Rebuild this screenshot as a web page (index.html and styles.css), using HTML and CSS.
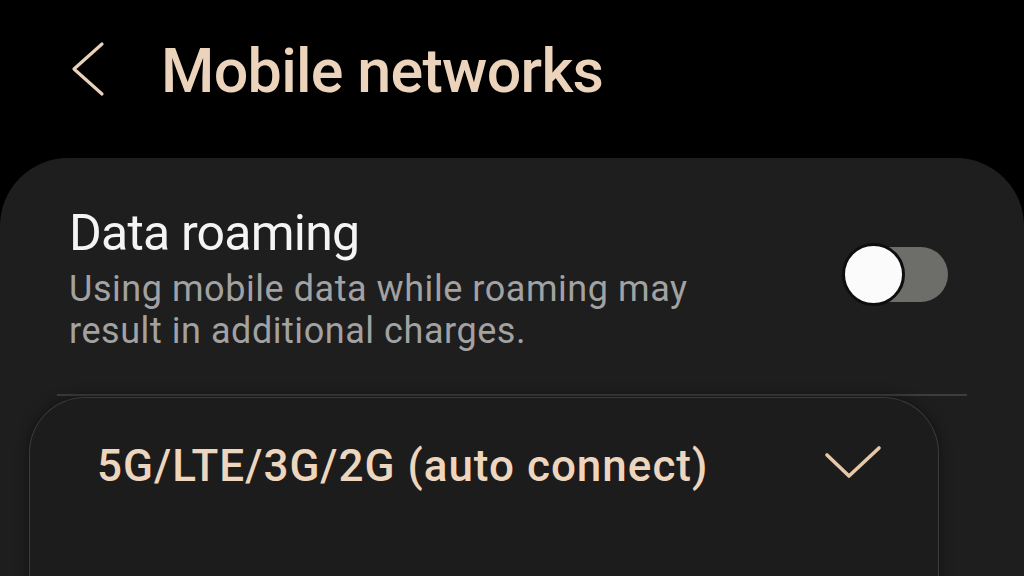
FILE: index.html
```html
<!DOCTYPE html>
<html lang="en">
<head>
<meta charset="utf-8">
<title>Mobile networks</title>
<link rel="stylesheet" href="styles.css">
</head>
<body>
<header class="appbar">
  <svg class="back" width="34" height="56" viewBox="0 0 34 56"><path d="M31 3 L3 28 L31 53" fill="none" stroke="#e9d2bb" stroke-width="3.2" stroke-linecap="round" stroke-linejoin="round"/></svg>
  <h1 class="title">Mobile networks</h1>
</header>
<main class="card">
  <div class="row">
    <div class="row-text">
      <div class="row-title">Data roaming</div>
      <div class="row-sub">Using mobile data while roaming may<br>result in additional charges.</div>
    </div>
    <div class="switch"><div class="knob"></div></div>
  </div>
  <div class="divider"></div>
  <div class="popup">
    <div class="option">
      <span class="option-label">5G/LTE/3G/2G (auto connect)</span>
      <svg class="check" width="60" height="40" viewBox="0 0 60 40"><path d="M3 11 L25 32 L55 4" fill="none" stroke="#e6c7a8" stroke-width="3.6" stroke-linecap="round" stroke-linejoin="round"/></svg>
    </div>
  </div>
</main>
</body>
</html>
```
FILE: styles.css
```css
html, body {
  margin: 0;
  padding: 0;
  background: #000;
  width: 1024px;
  height: 576px;
  overflow: hidden;
  font-family: Roboto, "Noto Sans", sans-serif;
}
.appbar {
  height: 158px;
  display: flex;
  align-items: flex-start;
  box-sizing: border-box;
  padding-top: 40px;
  padding-left: 71px;
}
.back {
  display: block;
  margin-top: 1px;
}
.title {
  margin: 0 0 0 56px;
  font-size: 61px;
  line-height: 62px;
  font-weight: 500;
  color: #ecd4bc;
  letter-spacing: -0.7px;
}
.card {
  position: relative;
  background: #1e1e1e;
  border-radius: 68px 68px 0 0;
  height: 418px;
  overflow: hidden;
  box-sizing: border-box;
  padding-top: 46px;
}
.row {
  display: flex;
  align-items: center;
  justify-content: space-between;
  padding: 0 76px 0 69px;
}
.row-title {
  font-size: 50px;
  line-height: 58px;
  color: #f4f4f4;
  letter-spacing: -0.8px;
}
.row-sub {
  margin-top: 6px;
  font-size: 36px;
  line-height: 42px;
  color: #a2a2a2;
  letter-spacing: 0.55px;
}
.switch {
  position: relative;
  width: 93px;
  height: 55px;
  border-radius: 28px;
  background: #6d6d6a;
  margin-top: -8px;
}
.knob {
  position: absolute;
  left: -13px;
  top: -4px;
  width: 57px;
  height: 57px;
  border-radius: 50%;
  background: #fbfbfb;
  border: 3px solid #0e0e0e;
}
.divider {
  height: 2px;
  background: #3d3d3d;
  margin: 42px 57px 0 57px;
}
.popup {
  position: absolute;
  left: 29px;
  top: 239px;
  width: 910px;
  height: 200px;
  box-sizing: border-box;
  background: #1c1c1c;
  border: 1.5px solid #3b3b3b;
  border-bottom: none;
  border-radius: 56px 56px 0 0;
  box-shadow: 0 0 14px rgba(0,0,0,0.45);
  padding: 42px 54px 0 67px;
}
.option {
  display: flex;
  align-items: center;
  justify-content: space-between;
}
.option-label {
  font-size: 44px;
  line-height: 52px;
  font-weight: 500;
  color: #eed6be;
  letter-spacing: 1px;
}
.check {
  display: block;
  margin-top: -4px;
}
```
